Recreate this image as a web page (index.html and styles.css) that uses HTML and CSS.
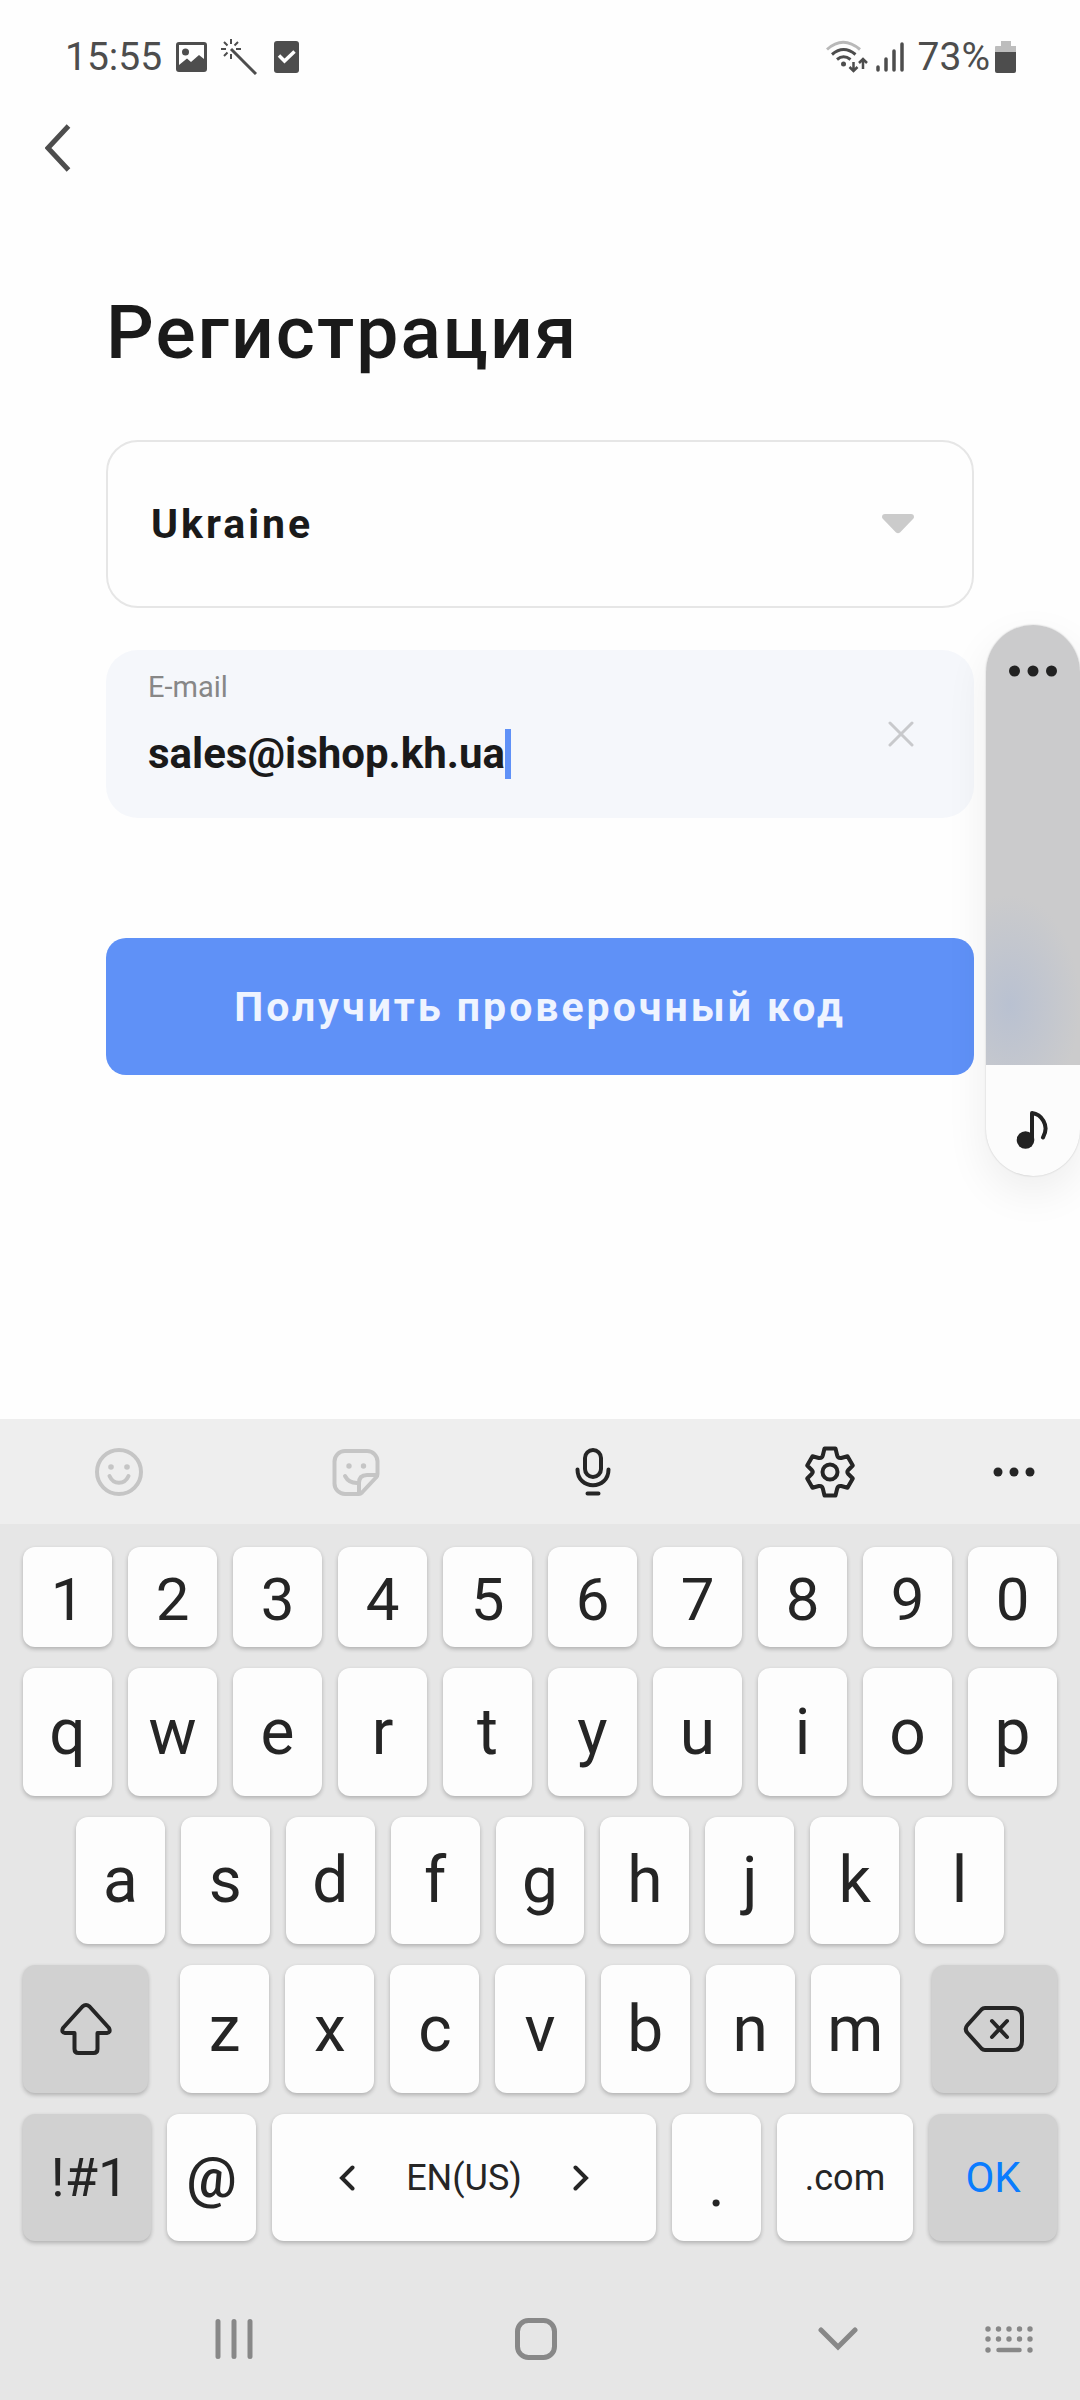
FILE: index.html
```html
<!DOCTYPE html>
<html lang="ru">
<head>
<meta charset="utf-8">
<meta name="viewport" content="width=device-width, initial-scale=1">
<title>Регистрация</title>
<link rel="stylesheet" href="styles.css">
</head>
<body>
<header class="status">
  <div class="status-group status-left">
    <span>15:55</span>
    <svg width="31" height="30" viewBox="0 0 31 30"><path fill="currentColor" fill-rule="evenodd" d="M3 0h25a3 3 0 0 1 3 3v24a3 3 0 0 1-3 3H3a3 3 0 0 1-3-3V3a3 3 0 0 1 3-3zm0 3v20l8-6.500 4 3.500 8-7 5 4V3z"/><circle cx="9.500" cy="10" r="3.500" fill="currentColor"/></svg>
    <svg width="37" height="36" viewBox="0 0 37 36" fill="none" stroke="currentColor" stroke-width="2"><path d="M10 0v5M10 15v5M0 10h5M15 10h5M3 3l3.500 3.500M17 3l-3.500 3.500M3 17l3.500-3.500"/><path stroke-width="3" d="M10 10l25 25"/></svg>
    <svg width="31" height="32" viewBox="0 0 31 32"><rect x="2" width="25" height="32" rx="3" fill="currentColor"/><path d="M7 14.500l5.500 5.500 10-9.500" fill="none" stroke="#fff" stroke-width="3.500"/></svg>
  </div>
  <div class="status-group status-right">
    <svg width="42" height="34" viewBox="0 0 42 34" fill="none" stroke="currentColor" stroke-width="3"><path stroke="#b9b9b9" d="M1 9.500Q17-5 34 9.500"/><path d="M6 14.500q11.500-10 23.500 0M11 19.500q6.500-5.500 13.500 0"/><circle cx="17.500" cy="24" r="2.500" fill="currentColor" stroke="none"/><path stroke-width="2.500" d="M27.500 22v8M23.500 27l4 4 4-4M37 29v-9M33 23l4-4 4 4"/></svg>
    <svg width="28" height="32" viewBox="0 0 28 32" fill="none" stroke="currentColor" stroke-width="3.500" stroke-linecap="round"><path d="M2 26v3M10 18v11M18 10v19M26 3v26"/></svg>
    <span class="battery">73%<svg width="22" height="34" viewBox="0 0 22 34"><path fill="#bdbdbd" d="M6 1h10v5h5v7H0V7q0-1 1-1h5z"/><path fill="currentColor" d="M0 12h21v19q0 2-2 2H2q-2 0-2-2z"/></svg></span>
  </div>
</header>

<nav class="appbar">
  <button class="icon-button back" type="button" aria-label="Назад"><svg width="26" height="48" viewBox="0 0 26 48" fill="none" stroke="currentColor" stroke-width="5"><path d="M23.500 2L3 24l20.500 22"/></svg></button>
</nav>

<main class="content">
  <h1>Регистрация</h1>
  <form class="form">
    <div class="country">
      <select aria-label="Страна"><option>Ukraine</option></select>
      <svg class="country-arrow" width="32" height="20" viewBox="0 0 32 20"><path fill="#cbcbcb" d="M3 0h26q3 0 3 3 0 1-1 2L18 18.500q-2 1.500-4 0L1 5Q0 4 0 3q0-3 3-3z"/></svg>
    </div>
    <div class="field">
      <div class="field-body">
        <label for="email">E-mail</label>
        <div class="field-value"><input id="email" type="text" inputmode="email" value="sales@ishop.kh.ua"><span class="caret"></span></div>
      </div>
      <button class="icon-button clear" type="button" aria-label="Очистить"><svg width="26" height="26" viewBox="0 0 26 26" fill="none" stroke="currentColor" stroke-width="3" stroke-linecap="round"><path d="M2 2l22 22M24 2L2 24"/></svg></button>
    </div>
    <button class="submit" type="button">Получить проверочный код</button>
  </form>
</main>

<aside class="edge">
  <button class="edge-top" type="button" aria-label="Ещё"><svg width="50" height="12" viewBox="0 0 50 12" fill="currentColor"><circle cx="6.500" cy="6" r="5.500"/><circle cx="25" cy="6" r="5.500"/><circle cx="43.500" cy="6" r="5.500"/></svg></button>
  <button class="edge-bottom" type="button" aria-label="Звук"><svg width="34" height="40" viewBox="0 0 34 40" fill="none" stroke="currentColor" stroke-width="4" stroke-linecap="round" stroke-linejoin="round"><circle cx="9.500" cy="30" r="8.800" fill="currentColor" stroke="none"/><path d="M16 30V3C25 4 34 15 27 27.500"/></svg></button>
</aside>

<section class="keyboard" aria-label="Клавиатура">
  <div class="tools">
    <button class="icon-button muted" type="button" aria-label="Эмодзи"><svg width="50" height="50" viewBox="0 0 50 50" fill="none" stroke="currentColor" stroke-width="4" stroke-linecap="round"><circle cx="25" cy="25" r="22"/><circle cx="17" cy="20" r="2.800" fill="currentColor" stroke="none"/><circle cx="33" cy="20" r="2.800" fill="currentColor" stroke="none"/><path d="M15.500 29c4 9 15 9 19 0"/></svg></button>
    <button class="icon-button muted" type="button" aria-label="Стикеры"><svg width="50" height="50" viewBox="0 0 50 50" fill="none" stroke="currentColor" stroke-width="4" stroke-linecap="round" stroke-linejoin="round"><path d="M28 47H14A10.500 10.500 0 0 1 3.500 36.500v-22A10.500 10.500 0 0 1 14 4h22a10.500 10.500 0 0 1 10.500 10.500V27q0 2-1.500 3.500L31 45.500Q29.500 47 28 47z"/><path d="M28 46V36q0-8 8-8h10"/><circle cx="18" cy="19" r="2.700" fill="currentColor" stroke="none"/><circle cx="32.500" cy="19" r="2.700" fill="currentColor" stroke="none"/><path d="M14 29q4 7.500 13 7"/></svg></button>
    <button class="icon-button" type="button" aria-label="Голосовой ввод"><svg width="50" height="50" viewBox="0 0 50 50" fill="none" stroke="currentColor" stroke-width="4" stroke-linecap="round"><rect x="17" y="3" width="16" height="27" rx="8"/><path d="M9.500 22.500c0 21 31 21 31 0M19.500 46.500h11"/></svg></button>
    <button class="icon-button" type="button" aria-label="Настройки"><svg width="52" height="54" viewBox="0 0 52 54" fill="none" stroke="currentColor" stroke-width="4" stroke-linejoin="round"><circle cx="26" cy="27" r="7.500"/><path d="M20.500 3.500h11l1.700 7q.8 3 4 2.500l6.300-1.700 5.300 9.200-4.500 4.500q-2 2 0 4l4.500 4.500-5.300 9.200-6.300-1.700q-3.200-.5-4 2.500l-1.700 7h-11l-1.700-7q-.8-3-4-2.500l-6.300 1.700-5.300-9.200 4.500-4.500q2-2 0-4l-4.500-4.500 5.300-9.200 6.300 1.700q3.200.5 4-2.500z"/></svg></button>
    <button class="icon-button" type="button" aria-label="Ещё"><svg width="42" height="10" viewBox="0 0 42 10" fill="currentColor"><circle cx="5" cy="5" r="4.500"/><circle cx="21" cy="5" r="4.500"/><circle cx="37" cy="5" r="4.500"/></svg></button>
  </div>
  <div class="keys">
    <div class="row digits">
      <button type="button">1</button><button type="button">2</button><button type="button">3</button><button type="button">4</button><button type="button">5</button><button type="button">6</button><button type="button">7</button><button type="button">8</button><button type="button">9</button><button type="button">0</button>
    </div>
    <div class="row">
      <button type="button">q</button><button type="button">w</button><button type="button">e</button><button type="button">r</button><button type="button">t</button><button type="button">y</button><button type="button">u</button><button type="button">i</button><button type="button">o</button><button type="button">p</button>
    </div>
    <div class="row row-home">
      <button type="button">a</button><button type="button">s</button><button type="button">d</button><button type="button">f</button><button type="button">g</button><button type="button">h</button><button type="button">j</button><button type="button">k</button><button type="button">l</button>
    </div>
    <div class="row row-shift">
      <button class="dark" type="button" aria-label="Shift"><svg width="54" height="54" viewBox="0 0 54 54" fill="none" stroke="currentColor" stroke-width="4" stroke-linejoin="round"><path d="M23.500 4.500q3.500-3 7 0L50 26q2 4.500-2 5h-9.500v16q0 4-4 4h-15q-4 0-4-4V31H6q-4-.5-2-5z"/></svg></button>
      <button type="button">z</button><button type="button">x</button><button type="button">c</button><button type="button">v</button><button type="button">b</button><button type="button">n</button><button type="button">m</button>
      <button class="dark" type="button" aria-label="Backspace"><svg width="62" height="48" viewBox="0 0 62 48" fill="none" stroke="currentColor" stroke-width="4" stroke-linecap="round" stroke-linejoin="round"><path d="M22 3h28q9 0 9 9v24q0 9-9 9H22q-2 0-3.500-1.500L4.500 28q-3.500-4 0-8l14-15.500Q20 3 22 3z"/><path d="M29 16l15 16M44 16L29 32"/></svg></button>
    </div>
    <div class="row row-bottom">
      <button class="dark symbols" type="button">!#1</button>
      <button class="at" type="button">@</button>
      <button class="space" type="button"><svg width="16" height="26" viewBox="0 0 16 26" fill="none" stroke="currentColor" stroke-width="4" stroke-linecap="round"><path d="M13.500 2.500L3 13l10.500 10.500"/></svg><span>EN(US)</span><svg width="16" height="26" viewBox="0 0 16 26" fill="none" stroke="currentColor" stroke-width="4" stroke-linecap="round"><path d="M2.500 2.500L13 13 2.500 23.500"/></svg></button>
      <button class="period" type="button">.</button>
      <button class="com" type="button">.com</button>
      <button class="dark ok" type="button">OK</button>
    </div>
  </div>
  <nav class="sysnav">
    <button class="icon-button" type="button" aria-label="Недавние"><svg width="38" height="42" viewBox="0 0 38 42" stroke="currentColor" stroke-width="5" stroke-linecap="round"><path d="M3 3.500v35M19 3.500v35M35 3.500v35"/></svg></button>
    <button class="icon-button" type="button" aria-label="Домой"><svg width="42" height="42" viewBox="0 0 42 42" fill="none" stroke="currentColor" stroke-width="5"><rect x="2.500" y="2.500" width="37" height="37" rx="11"/></svg></button>
    <button class="icon-button" type="button" aria-label="Скрыть"><svg width="40" height="26" viewBox="0 0 40 26" fill="none" stroke="currentColor" stroke-width="5" stroke-linecap="round"><path d="M3 4l17 17L37 4"/></svg></button>
    <button class="icon-button" type="button" aria-label="Выбор клавиатуры"><svg width="48" height="28" viewBox="0 0 48 28" fill="none" stroke="currentColor" stroke-width="5.400" stroke-linecap="round"><path d="M3 4h.01M13.500 4h.01M24 4h.01M34.500 4h.01M45 4h.01M3 14h.01M13.500 14h.01M24 14h.01M34.500 14h.01M45 14h.01M3 25h.01M45 25h.01"/><path stroke-width="4.500" d="M13.500 25h21"/></svg></button>
  </nav>
</section>
</body>
</html>
```

FILE: styles.css
```css
* { box-sizing: border-box; }

body {
  position: relative;
  display: flex;
  flex-direction: column;
  min-height: 100vh;
  margin: 0;
  overflow-x: hidden;
  background: #fefefe;
  color: #1a1a1a;
  font-family: Roboto, "Noto Sans", sans-serif;
}

svg { display: block; flex: none; }

button, input, select {
  margin: 0;
  padding: 0;
  border: 0;
  background: none;
  color: inherit;
  font: inherit;
}

.icon-button {
  display: flex;
  align-items: center;
  justify-content: center;
}

/* Status bar */
.status {
  display: flex;
  align-items: center;
  justify-content: space-between;
  height: 114px;
  padding: 0 63px 0 65px;
  color: #4d4d4d;
  font-size: 39px;
}
.status-group { display: flex; align-items: center; }
.status-left { gap: 14px; }
.status-right { gap: 8px; }
.battery { display: flex; align-items: center; gap: 5px; padding-left: 6px; }

.appbar { padding: 0 45px; color: #4d4d4d; }
.back { height: 68px; }

/* Registration form */
.content { flex: 1; padding: 106px 106px 0; }

h1 {
  margin: 0 0 64px;
  font-size: 75px;
  line-height: 88px;
  font-weight: 500;
  letter-spacing: 2px;
}

.form { display: flex; flex-direction: column; }

.country { display: grid; align-items: center; }
.country > * { grid-area: 1 / 1; }
.country select {
  appearance: none;
  width: 100%;
  height: 168px;
  padding: 0 43px;
  border: 2px solid #e6e6e6;
  border-radius: 32px;
  font-size: 41px;
  font-weight: 700;
  letter-spacing: 3px;
}
.country-arrow {
  justify-self: end;
  margin-right: 60px;
  pointer-events: none;
}

.field {
  display: flex;
  align-items: center;
  justify-content: space-between;
  height: 168px;
  margin-top: 42px;
  padding: 0 49px 0 42px;
  border-radius: 32px;
  background: #f5f7fb;
}
.field-body {
  display: flex;
  flex-direction: column;
  align-self: flex-start;
  gap: 24px;
  padding-top: 19px;
}
.field label { color: #878787; font-size: 29px; line-height: 36px; }
.field-value { display: flex; align-items: center; height: 50px; }
.field input {
  field-sizing: content;
  font-size: 42px;
  line-height: 50px;
  font-weight: 700;
  outline: 0;
}
.caret { width: 6px; height: 50px; background: #5f91f7; }
.clear { width: 48px; height: 48px; color: #c8c9cc; }

.submit {
  height: 137px;
  margin-top: 120px;
  border-radius: 20px;
  background: #5f91f7;
  color: #eff4ff;
  font-size: 41px;
  font-weight: 700;
  letter-spacing: 3px;
}

/* Floating edge panel */
.edge {
  position: absolute;
  top: 625px;
  right: 0;
  display: flex;
  flex-direction: column;
  width: 94px;
  overflow: hidden;
  border-radius: 47px;
  background: #fcfcfc;
  box-shadow: 0 16px 44px rgba(0, 0, 0, .07), 0 0 2px rgba(0, 0, 0, .2);
  color: #222;
}
.edge button { display: flex; justify-content: center; }
.edge-top {
  height: 440px;
  padding-top: 40px;
  background: radial-gradient(ellipse 70px 110px at 24px 380px, #b9c1d1, rgba(200, 201, 204, 0)), #cbcbcc;
}
.edge-bottom { height: 111px; padding-top: 45px; }

/* On-screen keyboard */
.keyboard { background: #e6e6e6; color: #252525; }

.tools {
  display: grid;
  grid-template-columns: repeat(4, 1fr) 132px;
  height: 105px;
  background: #eee;
}
.muted { color: #c5c5c5; }

.keys {
  display: flex;
  flex-direction: column;
  gap: 21px;
  padding: 23px 23px 0;
}
.row { display: flex; gap: 16px; }
.row button {
  display: flex;
  flex: 89 1 0;
  align-items: center;
  justify-content: center;
  min-width: 0;
  height: 128px;
  border-radius: 12px;
  background: #fdfdfd;
  box-shadow: 0 2px 4px rgba(0, 0, 0, .24);
  font-size: 64px;
}
.row .dark { background: #d1d1d1; }
.digits button { height: 100px; padding-top: 4px; font-size: 60px; }
.row-home { padding: 0 53px; }
.row-home button { height: 127px; }
.row-shift .dark { flex-grow: 125; }
.row-shift .dark:first-child { margin-right: 16px; }
.row-shift .dark:last-child { margin-left: 16px; }
.row-bottom button { height: 127px; }
.row .symbols { flex-grow: 128; font-size: 54px; text-indent: 5px; }
.row .at { font-size: 56px; font-weight: 500; }
.row .space { flex-grow: 384; gap: 51px; font-size: 36px; }
.row .period { padding-top: 14px; }
.row .com { flex-grow: 136; font-size: 36px; }
.row .ok { flex-grow: 128; color: #0a7cff; font-size: 42px; }

.sysnav {
  display: grid;
  grid-template-columns: 96fr 276fr 26fr 276fr 26fr 276fr 66fr 38fr;
  height: 159px;
  padding-top: 39px;
  color: #888;
}
.sysnav .icon-button { height: 118px; }
.sysnav .icon-button:nth-child(1) { grid-column: 2; }
.sysnav .icon-button:nth-child(2) { grid-column: 4; }
.sysnav .icon-button:nth-child(3) { grid-column: 6; }
.sysnav .icon-button:nth-child(4) { grid-column: 7; }
```
